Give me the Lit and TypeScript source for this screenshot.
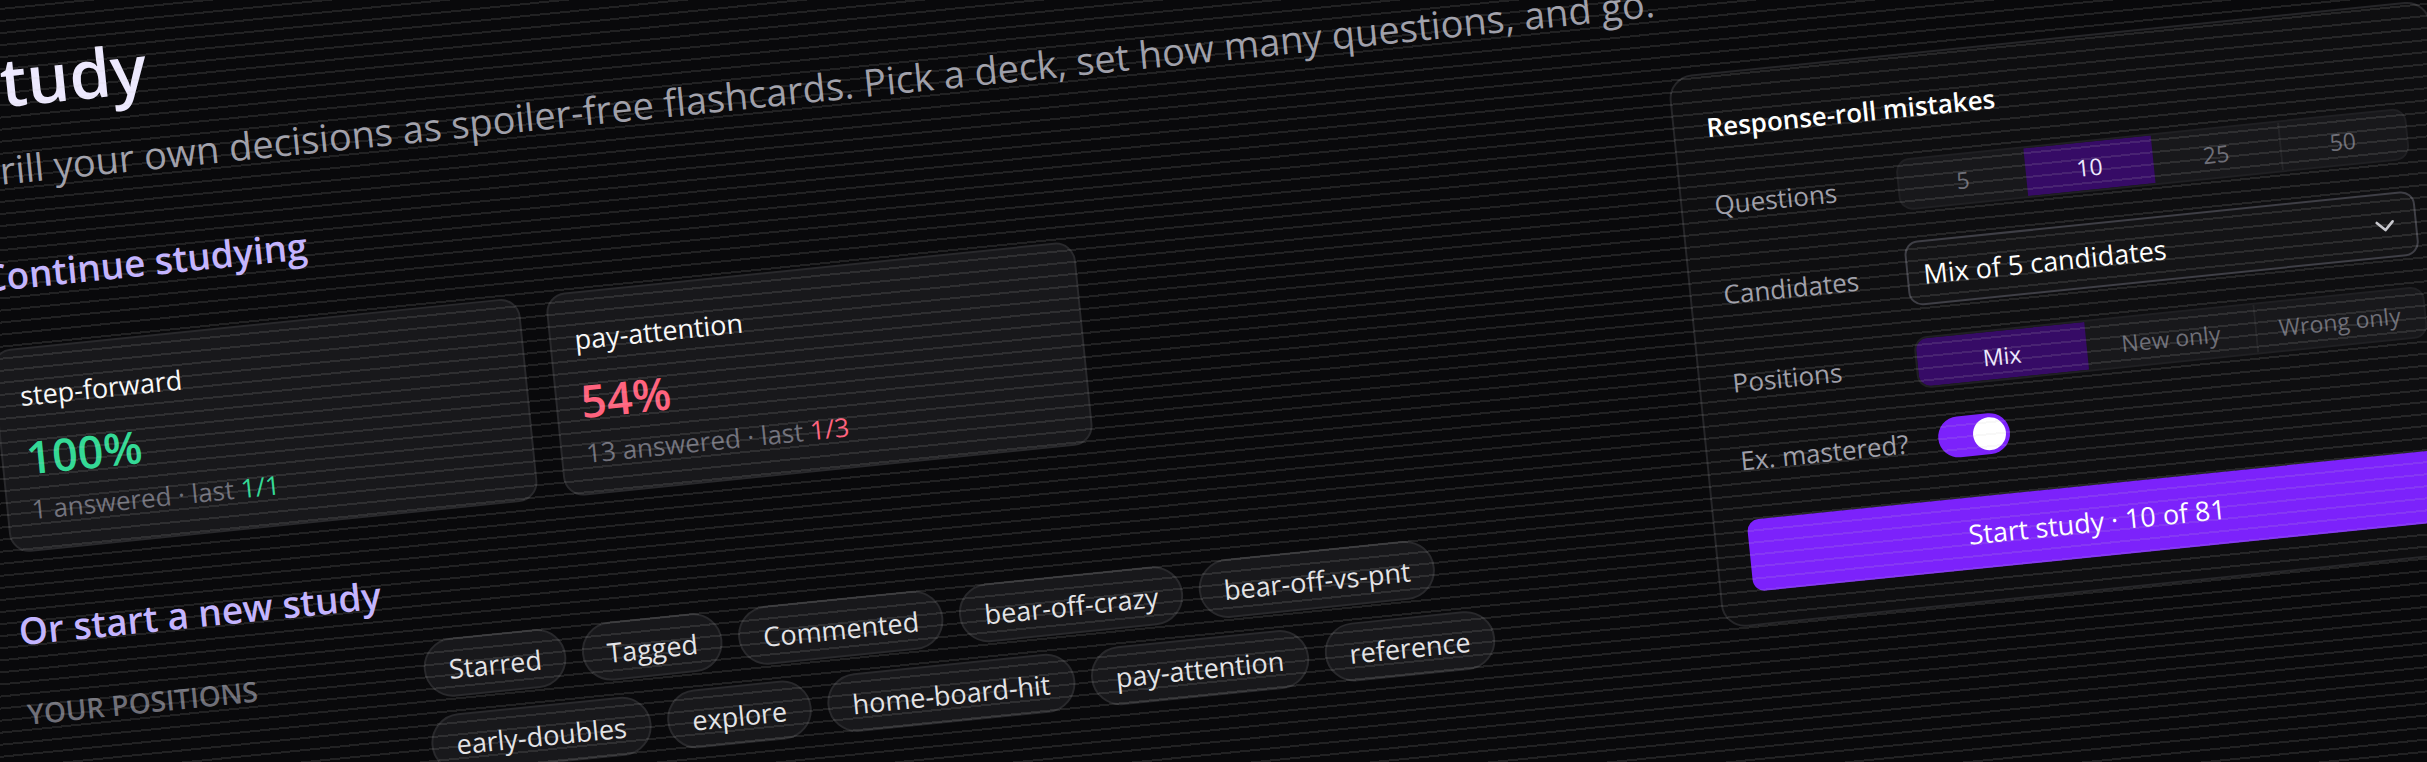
import { LitElement, css, html } from "lit";
import { customElement, property, state } from "lit/decorators.js";
import { classMap } from "lit/directives/class-map.js";

interface Deck {
  name: string;
  percent: number;
  answered: number;
  last: string;
  tone: "good" | "bad";
}

const DECKS: Deck[] = [
  { name: "step-forward", percent: 100, answered: 1, last: "1/1", tone: "good" },
  { name: "pay-attention", percent: 54, answered: 13, last: "1/3", tone: "bad" },
];

const TAGS = [
  "Starred",
  "Tagged",
  "Commented",
  "bear-off-crazy",
  "bear-off-vs-pnt",
  "early-doubles",
  "explore",
  "home-board-hit",
  "pay-attention",
  "reference",
];

@customElement("deck-card")
class DeckCard extends LitElement {
  @property({ attribute: false }) deck!: Deck;

  static styles = css`
    .card {
      display: flex;
      flex-direction: column;
      align-items: flex-start;
      box-sizing: border-box;
      width: 100%;
      padding: 26px 23px 22px;
      border: 2px solid #29292c;
      border-radius: 20px;
      background: #18181b;
      font: inherit;
      text-align: left;
      color: #fafafa;
      cursor: pointer;
    }
    .name {
      font-size: 27px;
      line-height: 40px;
      margin-bottom: 12px;
    }
    .percent {
      font-size: 45px;
      line-height: 60px;
      font-weight: 600;
      margin-bottom: 4px;
    }
    .meta {
      font-size: 26px;
      line-height: 36px;
      color: #71717b;
    }
    .good {
      color: #34d996;
    }
    .bad {
      color: #ff637e;
    }
  `;

  render() {
    const { name, percent, answered, last, tone } = this.deck;
    return html`
      <button class="card" type="button">
        <span class="name">${name}</span>
        <span class=${`percent ${tone}`}>${percent}%</span>
        <span class="meta">${answered} answered · last <span class=${tone}>${last}</span></span>
      </button>
    `;
  }
}

@customElement("segmented-choice")
class SegmentedChoice extends LitElement {
  @property() label = "";
  @property({ attribute: false }) options: string[] = [];
  @property() value = "";

  static styles = css`
    :host {
      display: block;
      flex: 1;
    }
    .group {
      display: flex;
      border: 2px solid #202023;
      border-radius: 14px;
      background: #18181b;
      overflow: hidden;
    }
    .cell {
      flex: 1 1 0;
      display: flex;
      align-items: center;
      justify-content: center;
      box-sizing: border-box;
      height: 48px;
      padding-top: 2px;
      font-size: 23px;
      line-height: 32px;
      color: #6e6e77;
      cursor: pointer;
    }
    .cell + .cell {
      box-shadow: inset 2px 0 #242427;
    }
    .cell.on,
    .cell.on + .cell {
      box-shadow: none;
    }
    .cell.on {
      background: #360b66;
      color: #ede9fe;
    }
    .radio {
      appearance: none;
      width: 0;
      height: 0;
      margin: 0;
    }
  `;

  render() {
    return html`
      <div class="group" role="radiogroup" aria-label=${this.label}>
        ${this.options.map(
          (option) => html`
            <label class=${classMap({ cell: true, on: option === this.value })}>
              <input
                class="radio"
                type="radio"
                name="choice"
                .value=${option}
                .checked=${option === this.value}
                @change=${() => (this.value = option)}
              />${option}
            </label>
          `,
        )}
      </div>
    `;
  }
}

@customElement("study-panel")
class StudyPanel extends LitElement {
  @state() private excludeMastered = true;

  static styles = css`
    :host {
      display: block;
    }
    .panel {
      display: flex;
      flex-direction: column;
      gap: 31px;
      padding: 32px;
      border: 2px solid #262629;
      border-radius: 24px;
      background: #0e0e10;
    }
    .title {
      margin: 0;
      font-size: 26px;
      line-height: 40px;
      font-weight: 600;
      color: #ffffff;
    }
    .field {
      display: flex;
      align-items: center;
      gap: 16px;
    }
    .label {
      flex: none;
      width: 168px;
      padding-top: 2px;
      font-size: 26px;
      line-height: 36px;
      white-space: nowrap;
      color: #9f9fa9;
    }
    .picker {
      position: relative;
      flex: 1;
      display: flex;
    }
    .select {
      appearance: none;
      flex: 1;
      height: 65px;
      padding: 2px 56px 0 15px;
      border: 2px solid #3f3f46;
      border-radius: 14px;
      background: #141416;
      font: inherit;
      font-size: 27px;
      color: #ffffff;
    }
    .chevron {
      position: absolute;
      right: 20px;
      top: 21px;
      width: 24px;
      height: 24px;
      pointer-events: none;
    }
    .switch {
      appearance: none;
      display: flex;
      box-sizing: border-box;
      width: 72px;
      height: 41px;
      margin: 0 0 0 15px;
      padding: 4px;
      border-radius: 21px;
      background: #3f3f46;
      cursor: pointer;
    }
    .switch::before {
      content: "";
      width: 33px;
      height: 33px;
      border-radius: 50%;
      background: #ffffff;
    }
    .switch:checked {
      justify-content: flex-end;
      background: #7c22fb;
    }
    .start {
      height: 72px;
      margin: 10px 0 0;
      padding: 0;
      border: 0;
      border-radius: 12px;
      background: #7c22fb;
      font: inherit;
      font-size: 27px;
      color: #ffffff;
      cursor: pointer;
    }
  `;

  render() {
    return html`
      <section class="panel" aria-labelledby="title">
        <h3 class="title" id="title">Response-roll mistakes</h3>
        <div class="field">
          <span class="label">Questions</span>
          <segmented-choice label="Questions" .options=${["5", "10", "25", "50"]} value="10"></segmented-choice>
        </div>
        <div class="field">
          <label class="label" for="candidates">Candidates</label>
          <div class="picker">
            <select class="select" id="candidates">
              <option>Mix of 5 candidates</option>
            </select>
            <svg class="chevron" viewBox="0 0 24 24" fill="none" aria-hidden="true">
              <path d="M4 8l8 8 8-8" stroke="#c8c8ce" stroke-width="2.6" stroke-linecap="round" stroke-linejoin="round" />
            </svg>
          </div>
        </div>
        <div class="field">
          <span class="label">Positions</span>
          <segmented-choice
            label="Positions"
            .options=${["Mix", "New only", "Wrong only"]}
            value="Mix"
          ></segmented-choice>
        </div>
        <div class="field">
          <label class="label" for="mastered">Ex. mastered?</label>
          <input
            class="switch"
            id="mastered"
            type="checkbox"
            role="switch"
            .checked=${this.excludeMastered}
            @change=${(e: Event) => (this.excludeMastered = (e.target as HTMLInputElement).checked)}
          />
        </div>
        <button class="start" type="button">Start study · 10 of 81</button>
      </section>
    `;
  }
}

@customElement("app-root")
class AppRoot extends LitElement {
  static styles = css`
    :host {
      display: block;
      height: 100vh;
      overflow: hidden;
      background: #09090b;
      font-family: "Open Sans", "Noto Sans", sans-serif;
    }
    /* The whole sheet is tilted around the window's top left corner. */
    .sheet {
      position: relative;
      box-sizing: border-box;
      width: calc(100% + 77px);
      min-height: 150vh;
      margin-left: -77px;
      padding: 45px 11px 0 32px;
      transform: rotate(-5.8deg);
      transform-origin: 77px 0;
    }
    /* Fine ruled lines lie over everything. */
    .sheet::after {
      content: "";
      position: absolute;
      inset: 0 -80px 0 0;
      background: repeating-linear-gradient(
        transparent 0 8px,
        rgba(200, 200, 196, 0.13) 8px 10px,
        transparent 10px 12px
      );
      pointer-events: none;
    }
    .heading {
      margin: 0;
      font-size: 67px;
      line-height: 72px;
      font-weight: 600;
      color: #ede9fe;
    }
    .intro {
      margin: 24px 0 48px;
      font-size: 38px;
      line-height: 56px;
      color: #9f9fa9;
    }
    .columns {
      display: grid;
      grid-template-columns: 1fr 765px;
      align-items: start;
      gap: 50px;
    }
    .section {
      margin: 0;
      font-size: 37px;
      line-height: 60px;
      font-weight: 600;
      color: #c4b4ff;
    }
    .decks {
      display: grid;
      grid-template-columns: repeat(3, 1fr);
      gap: 26px;
      margin: 43px 0 48px;
    }
    .group {
      display: grid;
      grid-template-columns: 383px 1fr;
      gap: 16px;
      margin-top: 20px;
    }
    .caption {
      margin: 0;
      padding-top: 13px;
      font-size: 28px;
      line-height: 40px;
      font-weight: 600;
      text-transform: uppercase;
      color: #6e6e77;
    }
    .tags {
      display: flex;
      flex-wrap: wrap;
      gap: 17px 16px;
    }
    .tag {
      padding: 9px 23px 6px;
      border: 2px solid #29292c;
      border-radius: 30px;
      background: #18181b;
      font: inherit;
      font-size: 27px;
      line-height: 40px;
      color: #e4e4e7;
      cursor: pointer;
    }
    .tag:nth-child(5) {
      margin-right: 48px;
    }
  `;

  render() {
    return html`
      <main class="sheet">
        <h1 class="heading">Study</h1>
        <p class="intro">
          Drill your own decisions as spoiler-free flashcards. Pick a deck, set how many questions, and go.
        </p>
        <div class="columns">
          <div>
            <h2 class="section">Continue studying</h2>
            <div class="decks">${DECKS.map((deck) => html`<deck-card .deck=${deck}></deck-card>`)}</div>
            <h2 class="section">Or start a new study</h2>
            <div class="group">
              <h3 class="caption">Your positions</h3>
              <div class="tags">${TAGS.map((tag) => html`<button class="tag" type="button">${tag}</button>`)}</div>
            </div>
          </div>
          <study-panel></study-panel>
        </div>
      </main>
    `;
  }
}
